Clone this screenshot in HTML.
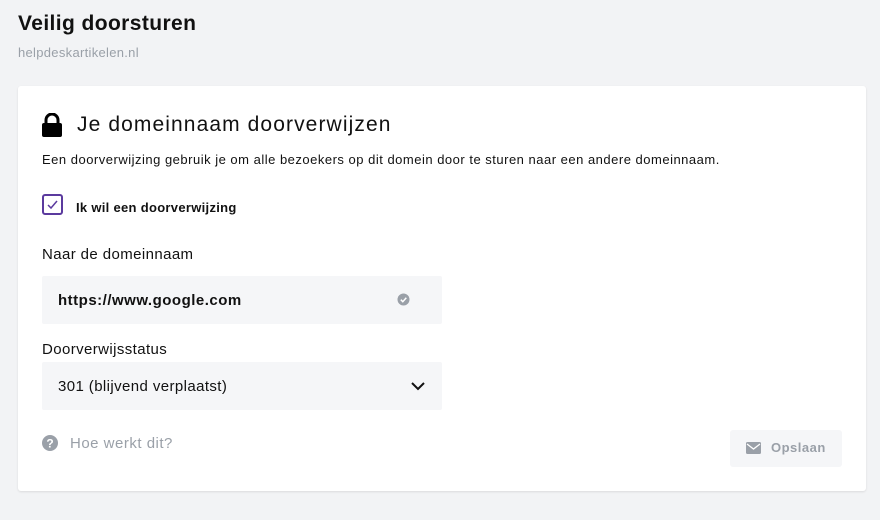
<!DOCTYPE html>
<html><head><style>
*{margin:0;padding:0;box-sizing:border-box}
body{width:880px;height:520px;background:#f2f3f5;font-family:"Liberation Sans",sans-serif;color:#111;position:relative;overflow:hidden}
.a{position:absolute;white-space:nowrap}
h1{position:absolute;left:18px;top:12px;font-size:21px;font-weight:bold;letter-spacing:0.4px}
.sub{left:18px;top:45px;font-size:13px;color:#9aa0a8;letter-spacing:0.3px}
.card{left:18px;top:86px;width:848px;height:405px;background:#fff;border-radius:3px;box-shadow:0 1px 2px rgba(0,0,0,.1)}
.field{background:#f5f6f8;border-radius:2px}
</style></head><body>
<h1>Veilig doorsturen</h1>
<div class="a sub">helpdeskartikelen.nl</div>
<div class="a card"></div>
<svg class="a" style="left:41px;top:113px" width="22" height="24" viewBox="0 0 22 24"><path d="M5 10V7a6 6 0 0 1 12 0v3" fill="none" stroke="#000" stroke-width="3"/><rect x="1" y="10" width="20" height="14" rx="2" fill="#000"/></svg>
<div class="a" style="left:77px;top:113px;font-size:21px;letter-spacing:1.1px">Je domeinnaam doorverwijzen</div>
<div class="a" style="left:42px;top:152px;font-size:13px;letter-spacing:0.5px">Een doorverwijzing gebruik je om alle bezoekers op dit domein door te sturen naar een andere domeinnaam.</div>
<div class="a" style="left:42px;top:194px;width:21px;height:21px;border:2px solid #5b3a9e;border-radius:3px"></div>
<svg class="a" style="left:46px;top:198px" width="13" height="13" viewBox="0 0 13 13"><path d="M2 7l3 3 6-7" fill="none" stroke="#5b3a9e" stroke-width="1.5"/></svg>
<div class="a" style="left:76px;top:200px;font-size:13px;font-weight:bold;letter-spacing:0.3px">Ik wil een doorverwijzing</div>
<div class="a" style="left:42px;top:246px;font-size:15px;letter-spacing:0.4px">Naar de domeinnaam</div>
<div class="a field" style="left:42px;top:276px;width:400px;height:48px"></div>
<div class="a" style="left:58px;top:292px;font-size:15px;font-weight:bold;letter-spacing:0.5px">https://www.google.com</div>
<svg class="a" style="left:397px;top:293px" width="13" height="13" viewBox="0 0 13 13"><circle cx="6.5" cy="6.5" r="6" fill="#9aa0a8"/><path d="M3.8 6.7l2 2 3.5-4" fill="none" stroke="#fff" stroke-width="1.5"/></svg>
<div class="a" style="left:42px;top:341px;font-size:15px;letter-spacing:0.4px">Doorverwijsstatus</div>
<div class="a field" style="left:42px;top:362px;width:400px;height:48px"></div>
<div class="a" style="left:58px;top:378px;font-size:15px;letter-spacing:0.4px">301 (blijvend verplaatst)</div>
<svg class="a" style="left:410px;top:381px" width="16" height="10" viewBox="0 0 16 10"><path d="M2 2l6 6 6-6" fill="none" stroke="#111" stroke-width="2"/></svg>
<svg class="a" style="left:42px;top:435px" width="16" height="16" viewBox="0 0 16 16"><circle cx="8" cy="8" r="8" fill="#9aa0a8"/><text x="8" y="12.5" font-size="12" font-weight="bold" fill="#fff" text-anchor="middle" font-family="Liberation Sans">?</text></svg>
<div class="a" style="left:70px;top:435px;font-size:15px;color:#9aa0a8;letter-spacing:0.5px">Hoe werkt dit?</div>
<div class="a" style="left:730px;top:430px;width:112px;height:37px;background:#f5f6f8;border-radius:3px"></div>
<svg class="a" style="left:746px;top:442px" width="15" height="12" viewBox="0 0 15 12"><rect width="15" height="12" rx="1.5" fill="#9aa0a8"/><path d="M1 2l6.5 5L14 2" fill="none" stroke="#fff" stroke-width="1.3"/></svg>
<div class="a" style="left:771px;top:440px;font-size:13px;font-weight:bold;color:#9aa0a8;letter-spacing:0.5px">Opslaan</div>
</body></html>
